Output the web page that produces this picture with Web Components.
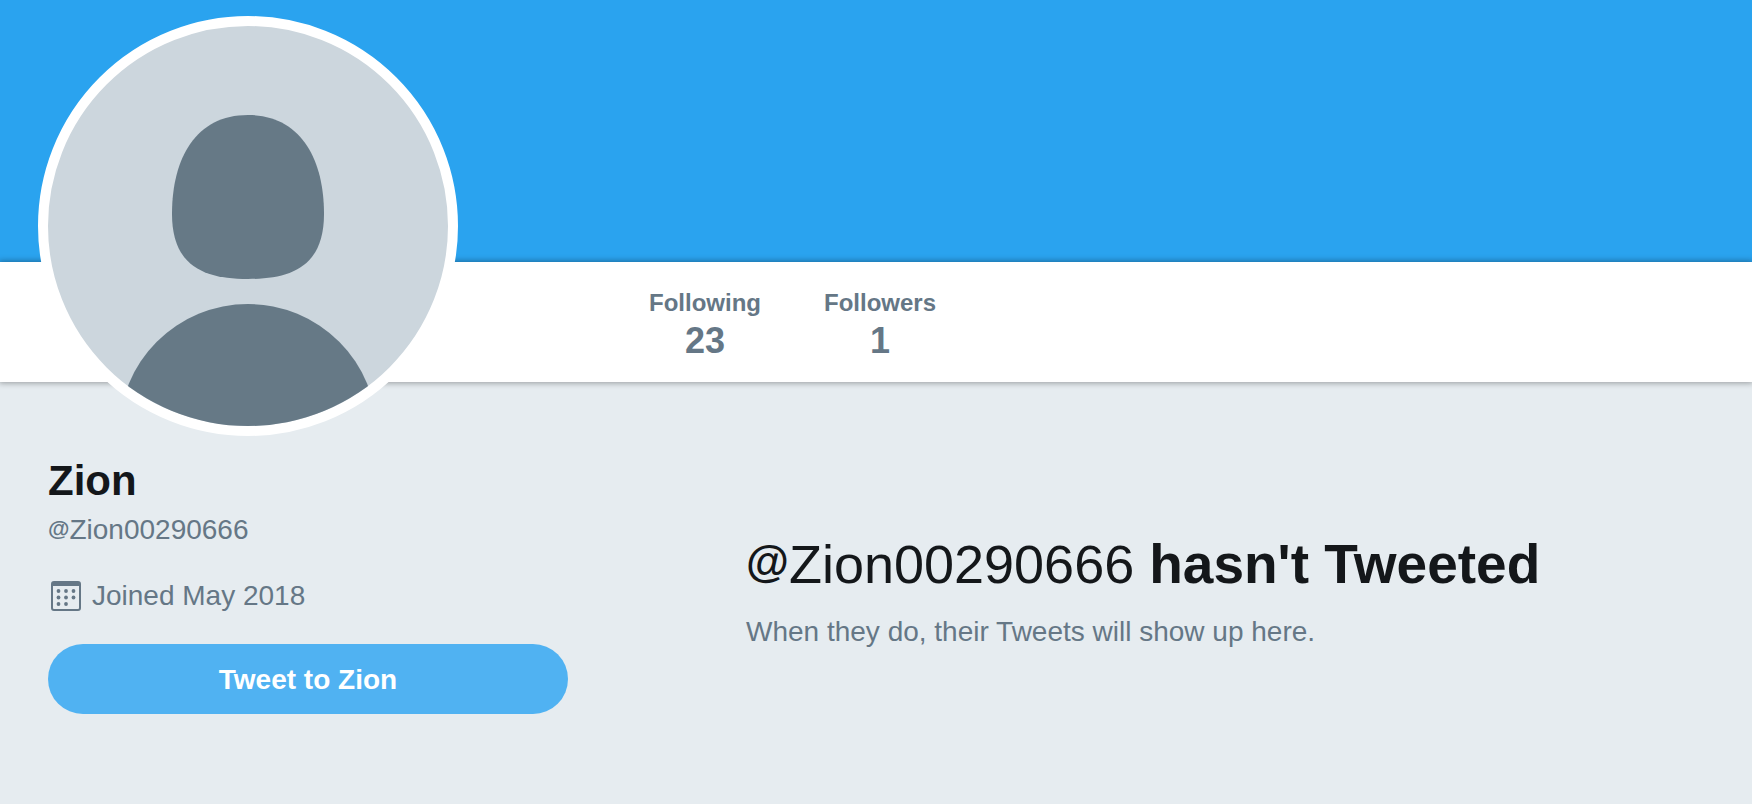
<!DOCTYPE html>
<html lang="en"><head><meta charset="utf-8"><title>Zion (@Zion00290666)</title>
<style>
body{margin:0;min-height:100vh;background:#e6ecf0;font-family:"Liberation Sans",Arial,sans-serif;color:#14171a}
</style></head><body><profile-page></profile-page>
<script>
function define(name, html){
  customElements.define(name, class extends HTMLElement{
    constructor(){super();const t=document.createElement('template');t.innerHTML=html;
      this.attachShadow({mode:'open'}).append(t.content.cloneNode(true));}
  });
}
define('profile-avatar',`<style>
:host{display:block;box-sizing:border-box;width:420px;height:420px;border:10px solid #fff;border-radius:50%;overflow:hidden;background:#ccd6dd}
svg{display:block;width:100%;height:100%}
</style><svg viewBox="0 0 400 400" role="img" aria-label="Profile picture">
<path fill="#667986" d="M200 89C252 89 276 132 276 188C276 240 244 253 200 253C156 253 124 240 124 188C124 132 148 89 200 89Z"/>
<circle cx="200" cy="407" r="129" fill="#667986"/></svg>`);
define('profile-stat',`<style>
:host{display:block;min-width:116px}
a{display:flex;flex-direction:column;align-items:center;color:#657786;text-decoration:none;font-weight:bold}
.l{font-size:24px;line-height:28px}
.v{font-size:36px;line-height:48px}
</style><a href="#"><span class="l"><slot name="label"></slot></span><span class="v"><slot></slot></span></a>`);
define('profile-info',`<style>
:host{display:block}
h1{margin:0;font-size:42px;line-height:52px}
a{color:#657786;text-decoration:none;font-size:28px;line-height:36px;display:block;margin-top:5px}
b{font-size:22px;line-height:22px;vertical-align:3px}
.joined{display:flex;align-items:center;gap:10px;margin:30px 0 0;font-size:28px;line-height:36px;color:#657786}
svg{width:32px;height:32px;margin-left:2px}
button{display:block;width:100%;height:70px;margin-top:30px;padding:2px 0 0;border:0;border-radius:35px;background:#50b2f2;color:#fff;font:bold 28px/36px "Liberation Sans",Arial,sans-serif}
</style>
<h1>Zion</h1><a href="#"><b>@</b>Zion00290666</a>
<p class="joined"><svg viewBox="0 0 32 32" aria-hidden="true"><path fill="#657786" fill-rule="evenodd" d="M4 1H28Q31 1 31 4V28Q31 31 28 31H4Q1 31 1 28V4Q1 1 4 1ZM3 6V28Q3 29 4 29H28Q29 29 29 28V6Z"/><g fill="#657786"><circle cx="8.500" cy="11" r="1.900"/><circle cx="16" cy="11" r="1.900"/><circle cx="23.500" cy="11" r="1.900"/><circle cx="8.500" cy="17.500" r="1.900"/><circle cx="16" cy="17.500" r="1.900"/><circle cx="23.500" cy="17.500" r="1.900"/><circle cx="8.500" cy="24" r="1.900"/><circle cx="16" cy="24" r="1.900"/></g></svg><span>Joined May 2018</span></p>
<button type="button">Tweet to Zion</button>`);
define('empty-timeline',`<style>
:host{display:block}
h2{margin:0;font-size:55px;line-height:64px;font-weight:bold}
b{font-size:44px;line-height:44px;vertical-align:6px}
span{font-size:54px;font-weight:normal}
p{margin:18px 0 0;font-size:28px;line-height:36px;color:#657786}
</style><h2><b>@</b><span>Zion00290666 </span>hasn't Tweeted</h2><p>When they do, their Tweets will show up here.</p>`);
define('profile-page',`<style>
:host{display:block}
.cover{height:262px;background:#2aa3ef}
nav{position:relative;display:flex;gap:59px;height:120px;box-sizing:border-box;padding:27px 0 0 647px;background:#fff;box-shadow:0 0 6px 1px rgba(0,0,0,.35)}
main{display:grid;grid-template-columns:minmax(0,520px) minmax(0,1fr);gap:178px;padding:73px 48px 0}
profile-avatar{position:absolute;left:38px;top:16px}
empty-timeline{padding-top:77px}
</style>
<header><div class="cover"></div><nav><profile-stat><span slot="label">Following</span>23</profile-stat><profile-stat><span slot="label">Followers</span>1</profile-stat></nav><profile-avatar></profile-avatar></header>
<main><profile-info></profile-info><empty-timeline></empty-timeline></main>`);
</script></body></html>
